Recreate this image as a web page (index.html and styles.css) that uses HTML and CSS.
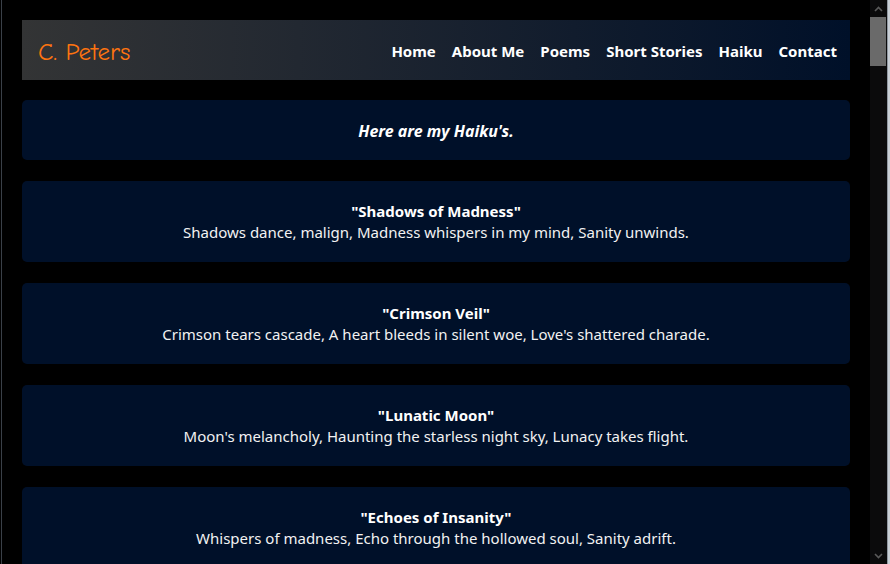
FILE: index.html
```html
<!DOCTYPE html>
<html lang="en">
<head>
<meta charset="utf-8">
<title>C. Peters - Haiku</title>
<link rel="stylesheet" href="styles.css">
</head>
<body>
<div class="frame">
  <div class="edge-left"></div>
  <main class="page">
    <header class="site-header">
      <div class="logo">C. Peters</div>
      <nav class="nav">
        <a href="#">Home</a>
        <a href="#">About Me</a>
        <a href="#">Poems</a>
        <a href="#">Short Stories</a>
        <a href="#">Haiku</a>
        <a href="#">Contact</a>
      </nav>
    </header>
    <section class="card intro">
      <p>Here are my Haiku's.</p>
    </section>
    <section class="card">
      <h3>"Shadows of Madness"</h3>
      <p>Shadows dance, malign, Madness whispers in my mind, Sanity unwinds.</p>
    </section>
    <section class="card">
      <h3>"Crimson Veil"</h3>
      <p>Crimson tears cascade, A heart bleeds in silent woe, Love's shattered charade.</p>
    </section>
    <section class="card">
      <h3>"Lunatic Moon"</h3>
      <p>Moon's melancholy, Haunting the starless night sky, Lunacy takes flight.</p>
    </section>
    <section class="card">
      <h3>"Echoes of Insanity"</h3>
      <p>Whispers of madness, Echo through the hollowed soul, Sanity adrift.</p>
    </section>
  </main>
  <div class="scrollbar">
    <div class="sb-arrow"><svg width="9" height="6" viewBox="0 0 9 6"><path d="M1 5 L4.5 1.5 L8 5" fill="none" stroke="#5a5a5a" stroke-width="1.6"/></svg></div>
    <div class="sb-track"><div class="sb-thumb"></div></div>
    <div class="sb-arrow"><svg width="9" height="6" viewBox="0 0 9 6"><path d="M1 1 L4.5 4.5 L8 1" fill="none" stroke="#5a5a5a" stroke-width="1.6"/></svg></div>
  </div>
  <div class="edge-right"></div>
</div>
</body>
</html>
```

FILE: styles.css
```css
* { box-sizing: border-box; }
html, body {
  margin: 0;
  padding: 0;
  background: #000;
  height: 100%;
  overflow: hidden;
}
body {
  font-family: "Noto Sans", "Open Sans", sans-serif;
  color: #fff;
}
.frame {
  display: flex;
  height: 564px;
}
.edge-left {
  width: 2px;
  flex: none;
  background: linear-gradient(to right, #000 0 1px, #3a4048 1px);
}
.page {
  flex: 1;
  min-width: 0;
  height: 564px;
  overflow: hidden;
  padding: 20px 20px 0 20px;
  display: flex;
  flex-direction: column;
  gap: 21px;
}
.page > .site-header {
  margin-bottom: -1px;
}
.site-header {
  flex: none;
  height: 60px;
  display: flex;
  align-items: center;
  justify-content: space-between;
  padding: 2px 13px 0 16px;
  background: linear-gradient(to right, #333435, #001029);
}
.logo {
  font-family: "Comic Sans MS", "Comic Neue", cursive;
  font-size: 25px;
  font-weight: 400;
  color: #ff7410;
}
.nav {
  display: flex;
  gap: 16px;
}
.nav a {
  color: #fff;
  text-decoration: none;
  font-weight: 700;
  font-size: 15px;
}
.card {
  flex: none;
  background: #001029;
  border-radius: 5px;
  padding: 20px 20px 19px;
  text-align: center;
  line-height: 21px;
  font-size: 15px;
}
.card h3 {
  margin: 0;
  font-size: 15px;
  font-weight: 700;
}
.card p {
  margin: 0;
  color: #f2f2f2;
}
.intro p {
  font-weight: 700;
  font-style: italic;
  font-size: 16px;
  color: #fff;
}
.intro {
  padding-top: 21px;
  padding-bottom: 18px;
}
.scrollbar {
  width: 17px;
  flex: none;
  background: #0b0b0c;
  display: flex;
  flex-direction: column;
}
.sb-arrow {
  height: 17px;
  display: flex;
  align-items: center;
  justify-content: center;
  flex: none;
}
.sb-track {
  flex: 1;
  padding: 0 1px 0 0;
}
.sb-thumb {
  height: 49px;
  background: #6a6a6a;
}
.edge-right {
  width: 3px;
  flex: none;
  background: linear-gradient(to right, #8f97a0 0 1px, #c9cfd6 1px);
}
```
